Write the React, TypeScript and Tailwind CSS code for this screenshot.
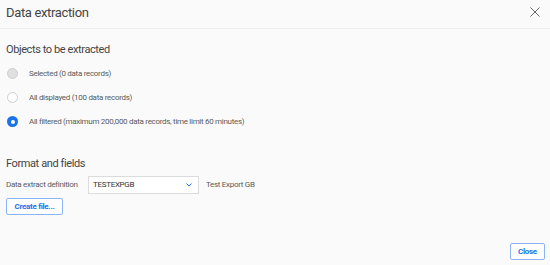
import React from "react";

const label = "text-[8px] tracking-[-0.3px] text-[#5a5a5a]";

export default function App() {
  return (
    <div className="w-[550px] h-[265px] bg-[#fafafa] flex flex-col overflow-hidden" style={{ fontFamily: "Roboto, sans-serif" }}>
      <div className="h-[29px] border-b border-[#eeeeee] flex items-center justify-between pl-[6px] pr-[10px] shrink-0">
        <span className="text-[13px] tracking-[-0.35px] text-[#444] leading-none -mt-[4px]">Data extraction</span>
        <svg width="10" height="10" viewBox="0 0 10 10" className="-mt-[4px]">
          <path d="M0.5 0.5L9.5 9.5M9.5 0.5L0.5 9.5" stroke="#666" strokeWidth="1" fill="none" />
        </svg>
      </div>
      <div className="flex flex-col pl-[6px] pt-[14px]">
        <div className="text-[11px] tracking-[-0.4px] text-[#444] leading-[14px]">Objects to be extracted</div>
        <div className="flex flex-col gap-[13px] mt-[11px]">
          <div className="flex items-center h-[11px]">
            <span className="w-[11px] h-[11px] rounded-full bg-[#e0e0e0] border border-[#cfcfcf] ml-[1px] shrink-0"></span>
            <span className={`ml-[11px] ${label}`}>Selected (0 data records)</span>
          </div>
          <div className="flex items-center h-[11px]">
            <span className="w-[11px] h-[11px] rounded-full bg-white border border-[#cfcfcf] ml-[1px] shrink-0"></span>
            <span className={`ml-[11px] ${label}`}>All displayed (100 data records)</span>
          </div>
          <div className="flex items-center h-[11px]">
            <span className="w-[11px] h-[11px] rounded-full bg-[#1a73e8] ml-[1px] flex items-center justify-center shrink-0">
              <span className="w-[4px] h-[4px] rounded-full bg-white"></span>
            </span>
            <span className={`ml-[11px] ${label}`}>All filtered (maximum 200,000 data records, time limit 60 minutes)</span>
          </div>
        </div>
        <div className="text-[11px] tracking-[-0.4px] text-[#444] leading-[14px] mt-[30px]">Format and fields</div>
        <div className="flex items-center mt-[5px]">
          <span className={`${label} w-[82px]`}>Data extract definition</span>
          <div className="w-[111px] h-[18px] bg-white border border-[#dcdcdc] flex items-center justify-between pl-[4px] pr-[6px]">
            <span className="text-[8px] tracking-[-0.3px] text-[#333]">TESTEXPGB</span>
            <svg width="6" height="4" viewBox="0 0 6 4">
              <path d="M0.5 0.5L3 3L5.5 0.5" stroke="#1a73e8" strokeWidth="1" fill="none" />
            </svg>
          </div>
          <span className={`ml-[7px] ${label}`}>Test Export GB</span>
        </div>
        <div className="flex mt-[4px]">
          <button className="h-[17px] w-[57px] border border-[#8ab4f8] rounded-[2px] bg-white text-[8px] tracking-[-0.3px] font-bold text-[#1a73e8] leading-none">Create file...</button>
        </div>
      </div>
      <div className="flex-1"></div>
      <div className="flex justify-end pr-[5px] pb-[5px]">
        <button className="h-[17px] w-[35px] border border-[#8ab4f8] rounded-[2px] bg-white text-[8px] tracking-[-0.3px] font-bold text-[#1a73e8] leading-none">Close</button>
      </div>
    </div>
  );
}
